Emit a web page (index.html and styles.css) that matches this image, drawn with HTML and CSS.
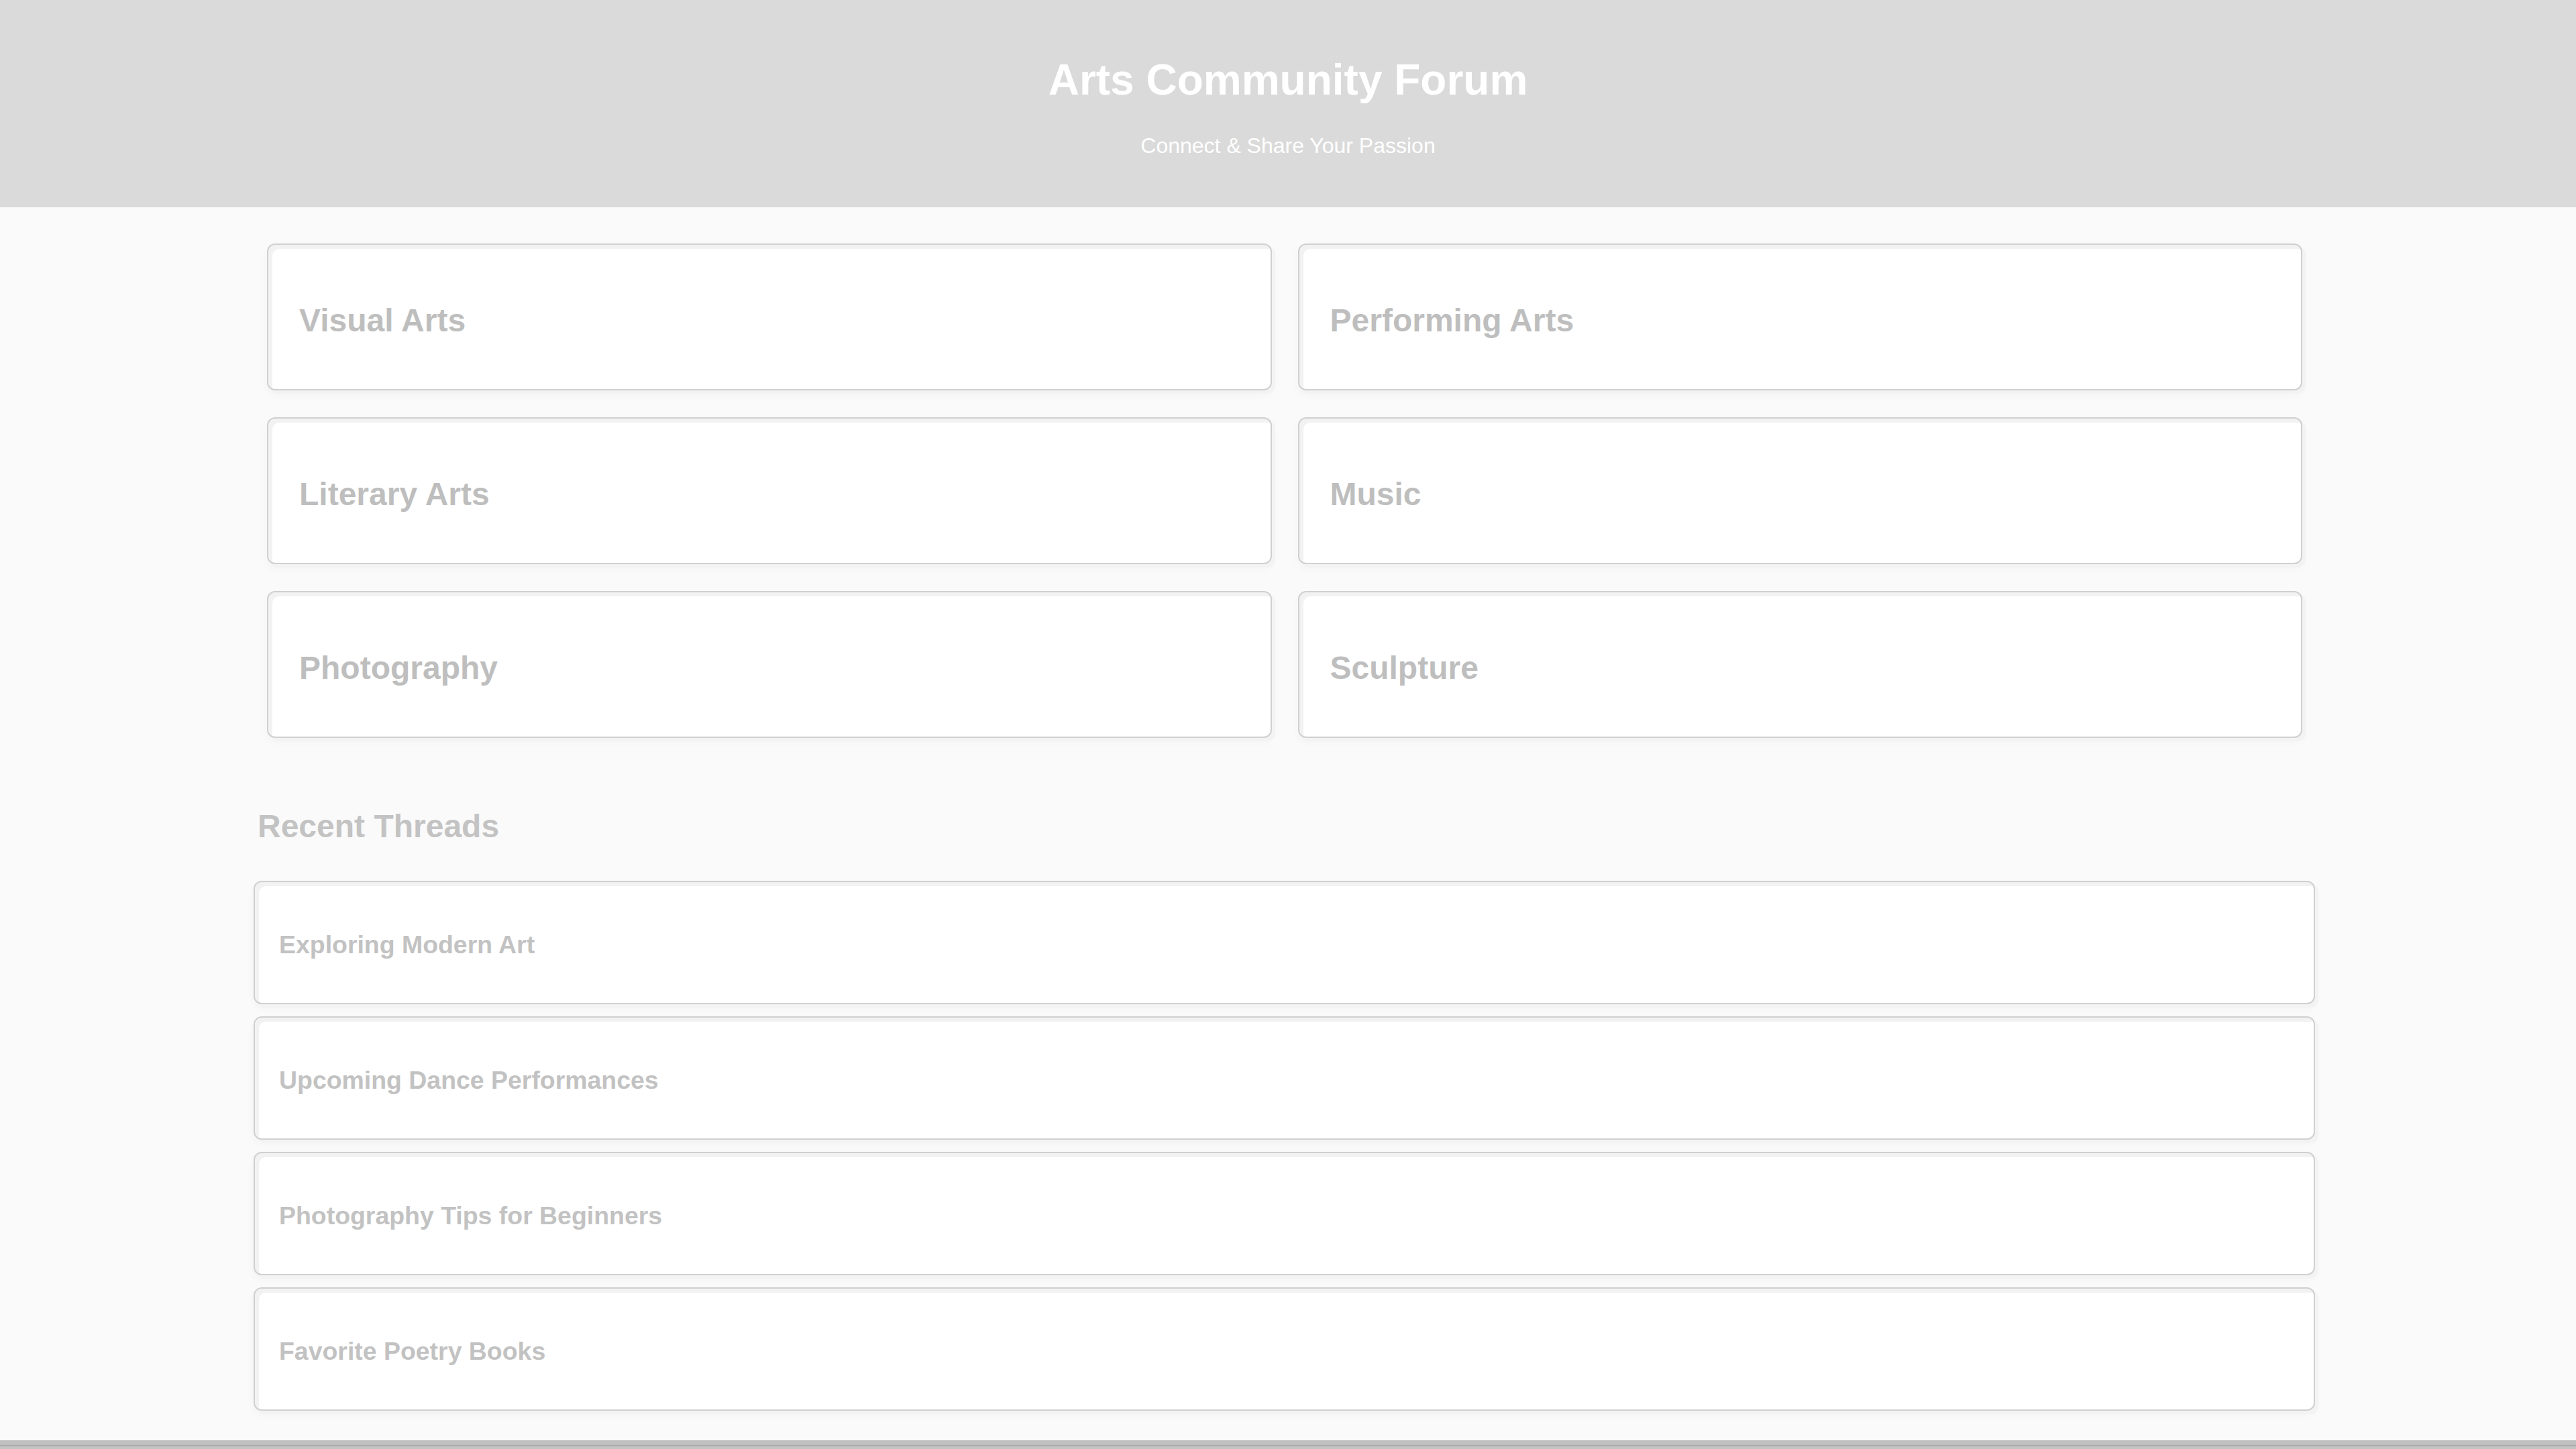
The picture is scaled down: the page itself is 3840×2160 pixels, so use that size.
FILE: index.html
```html
<!DOCTYPE html>
<html lang="en">
<head>
<meta charset="utf-8">
<title>Arts Community Forum</title>
<link rel="stylesheet" href="styles.css">
</head>
<body>
<header class="site-header">
  <h1 class="site-title">Arts Community Forum</h1>
  <p class="site-tagline">Connect &amp; Share Your Passion</p>
</header>
<main class="container">
  <section class="categories">
    <div class="category-card"><h2>Visual Arts</h2></div>
    <div class="category-card"><h2>Performing Arts</h2></div>
    <div class="category-card"><h2>Literary Arts</h2></div>
    <div class="category-card"><h2>Music</h2></div>
    <div class="category-card"><h2>Photography</h2></div>
    <div class="category-card"><h2>Sculpture</h2></div>
  </section>
  <h2 class="section-title">Recent Threads</h2>
  <section class="thread-list">
    <div class="thread"><h3>Exploring Modern Art</h3></div>
    <div class="thread"><h3>Upcoming Dance Performances</h3></div>
    <div class="thread"><h3>Photography Tips for Beginners</h3></div>
    <div class="thread"><h3>Favorite Poetry Books</h3></div>
  </section>
</main>
<footer class="site-footer"></footer>
</body>
</html>
```
FILE: styles.css
```css
* { box-sizing: border-box; }

body {
  margin: 0;
  background: #fafafa;
  font-family: "Liberation Sans", Arial, sans-serif;
}

.site-header {
  background: #dadada;
  color: #ffffff;
  text-align: center;
  padding: 40px 0;
  height: 309px;
}

.site-title {
  margin: 43px 0;
  font-size: 64px;
  line-height: 73px;
  font-weight: bold;
}

.site-tagline {
  margin: 32px 0 0;
  font-size: 32px;
  line-height: 37px;
}

.container {
  width: 3073px;
  margin: 0 0 0 378px;
}

.categories {
  display: grid;
  grid-template-columns: 1fr 1fr;
  column-gap: 39px;
  row-gap: 40px;
  padding: 0 19px 0 20px;
  margin-top: 54px;
}

.category-card,
.thread {
  background: #ffffff;
  border: 2px solid #d0d0d0;
  border-radius: 12px;
  box-shadow:
    inset 6px 6px 0 #f2f2f2,
    5px 5px 0 #f3f3f3,
    0 6px 14px rgba(0, 0, 0, 0.03);
}

.category-card {
  height: 219px;
  padding: 85px 40px 75px 46px;
}

.category-card h2 {
  margin: 0;
  font-size: 48px;
  line-height: 55px;
  font-weight: bold;
  color: #bebebe;
}

.section-title {
  margin: 104px 0 54px 6px;
  font-size: 48px;
  line-height: 55px;
  font-weight: bold;
  color: #c3c3c3;
}

.thread-list {
  display: flex;
  flex-direction: column;
  gap: 18px;
}

.thread {
  height: 184px;
  padding: 72px 34px 65px 36px;
}

.thread h3 {
  margin: 0;
  font-size: 37.44px;
  line-height: 43px;
  font-weight: bold;
  color: #c2c2c2;
}

.site-footer {
  margin-top: 44px;
  height: 120px;
  background: linear-gradient(#c0c0c0 0 7px, #aaaaaa 7px 9px, #c4c4c4 9px);
}
```
